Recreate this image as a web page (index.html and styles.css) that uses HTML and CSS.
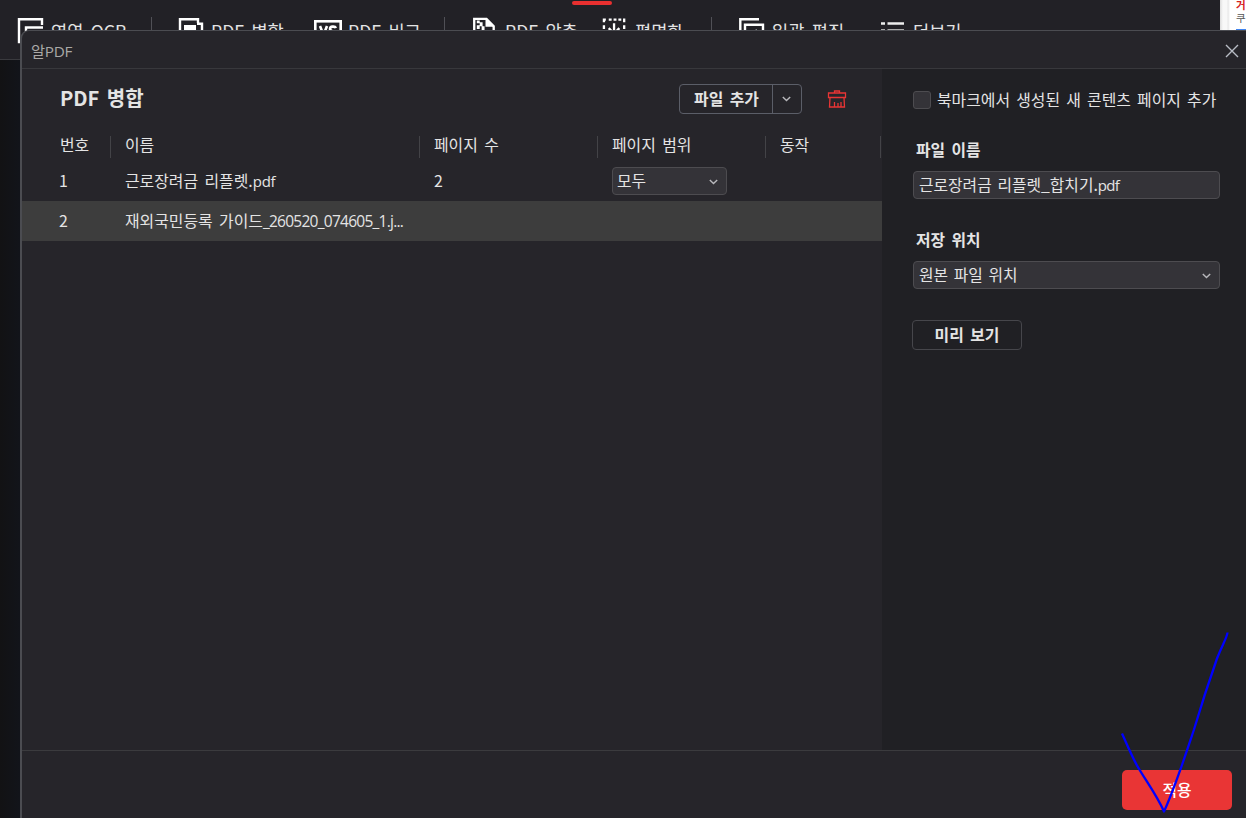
FILE: index.html
```html
<!DOCTYPE html>
<html lang="ko">
<head>
<meta charset="utf-8">
<title>알PDF</title>
<link rel="stylesheet" href="styles.css">
</head>
<body>
<div class="app">
  <header class="toolbar">
    <div class="tab-marker"></div>
    <div class="tool ocr">
      <svg class="tool-icon" width="28" height="28" viewBox="0 0 28 28"><path d="M25 8V2.300H2V25h4" fill="none" stroke="#fff" stroke-width="2.400"/><path d="M9 25V10.500h17" fill="none" stroke="#fff" stroke-width="2.400"/></svg>
      <span>영역 OCR</span>
    </div>
    <i class="tool-sep sep-a"></i>
    <div class="tool merge">
      <svg class="tool-icon" width="28" height="28" viewBox="0 0 28 28"><path d="M21 6V2.300H3v20h4M20 6.800h5v19H9v-4" fill="none" stroke="#fff" stroke-width="2.400"/><path d="M7 8h12v15H7z" fill="#fff"/></svg>
      <span>PDF 병합</span>
    </div>
    <div class="tool compare">
      <svg class="tool-icon" width="28" height="28" viewBox="0 0 28 28"><rect x="1.300" y="4.300" width="25.400" height="20" fill="none" stroke="#fff" stroke-width="2.600"/><path d="M6 9l3.500 9L13 9M22 11c-1-2-6-2-6 1s6 2 6 5-5 3-7 1" fill="none" stroke="#fff" stroke-width="2.600"/></svg>
      <span>PDF 비교</span>
    </div>
    <i class="tool-sep sep-b"></i>
    <div class="tool compress">
      <svg class="tool-icon" width="28" height="28" viewBox="0 0 28 28"><path d="M2.300 27V1.500H15L22.500 9v18" fill="none" stroke="#fff" stroke-width="2.400"/><path d="M14 1l9 8.500h-9zM5 3h3v3H5zM8 5h3v4H8zM5 8h3v4H5zM10 9h3v4h-3z" fill="#fff"/></svg>
      <span>PDF 압축</span>
    </div>
    <div class="tool flatten">
      <svg class="tool-icon" width="28" height="28" viewBox="0 0 28 28"><path d="M1 2.200h3M7 2.200h3M12 2.200h3M17 2.200h3M22 2.200h2M2 1v4M2 8v4M23 1v4M23 8v4" stroke="#fff" stroke-width="2.400"/><path d="M12.500 6v12M7 11l5.500 6 5.500-6" fill="none" stroke="#fff" stroke-width="2.400"/></svg>
      <span>평면화</span>
    </div>
    <i class="tool-sep sep-c"></i>
    <div class="tool batch">
      <svg class="tool-icon" width="28" height="28" viewBox="0 0 28 28"><path d="M21 2.300H2.300v18M7 25V7.800h18V25zM12 20l7-7" fill="none" stroke="#fff" stroke-width="2.400"/></svg>
      <span>일괄 편집</span>
    </div>
    <div class="tool more">
      <svg class="tool-icon" width="28" height="28" viewBox="0 0 28 28"><path d="M1 6.500h4M7.500 6.500H24" stroke="#eee" stroke-width="2.600"/><path d="M1 13h4M7.500 13H24M1 20h4M7.500 20H24" stroke="#aaa" stroke-width="2.200"/></svg>
      <span>더보기</span>
      <svg class="more-caret" width="10" height="6" viewBox="0 0 10 6"><path d="M1 1l4 4 4-4" fill="none" stroke="#777"/></svg>
    </div>
  </header>
  <aside class="side-page"><b>거</b><span>쿠</span><i></i></aside>

  <section class="dialog">
    <div class="titlebar">
      <span class="app-name">알PDF</span>
      <svg width="14" height="14" viewBox="0 0 14 14"><path d="M1 1l12 12M13 1L1 13" stroke="#b9bdc6" stroke-width="1.400"/></svg>
    </div>
    <div class="body">
      <main class="files">
        <div class="head">
          <h1>PDF 병합</h1>
          <div class="split-button">
            <span class="add">파일 추가</span>
            <span class="drop"><svg width="9" height="6" viewBox="0 0 9 6"><path class="caret" d="M.8.900l3.700 3.700L8.200.900"/></svg></span>
          </div>
          <svg class="clear" width="20" height="18" viewBox="0 0 20 18"><path d="M7.500 3V1h5v2M1.500 3h17v4.500h-17zM3 7.500L2.500 17h15L17 7.500M7.500 17v-5M11 17v-4M14 17v-5" fill="none" stroke="#e93535" stroke-width="1.300"/></svg>
        </div>
        <div class="row columns">
          <span>번호</span><span>이름</span><span>페이지 수</span><span>페이지 범위</span><span>동작</span>
        </div>
        <div class="row item">
          <span>1</span><span>근로장려금 리플렛.<span class="latin">pdf</span></span><span>2</span>
          <span><span class="field range">모두<svg width="9" height="6" viewBox="0 0 9 6"><path class="caret" d="M.8.900l3.700 3.700L8.200.900"/></svg></span></span><span></span>
        </div>
        <div class="row item selected">
          <span>2</span><span>재외국민등록 가이드<span class="digits">_260520_074605_1.j...</span></span><span></span><span></span><span></span>
        </div>
      </main>
      <aside class="options">
        <div class="check"><i class="box"></i><span>북마크에서 생성된 새 콘텐츠 페이지 추가</span></div>
        <h2>파일 이름</h2>
        <div class="field">근로장려금 리플렛_합치기.<span class="latin">pdf</span></div>
        <h2 class="second">저장 위치</h2>
        <div class="field">원본 파일 위치<svg width="9" height="6" viewBox="0 0 9 6"><path class="caret" d="M.8.900l3.700 3.700L8.200.900"/></svg></div>
        <div class="preview">미리 보기</div>
      </aside>
    </div>
    <footer class="footer"><div class="apply">적용</div></footer>
  </section>
  <svg class="ink" width="120" height="190" viewBox="0 0 120 190"><path d="M12 103.500c5 11 9 21 15 32 8 14 20 30 27 46 11-24 20-52 30-82 8-27 16-51 23-71 6-15 10-21 10.500-26" fill="none" stroke="#00f" stroke-width="2.300" stroke-linejoin="round"/></svg>
</div>
</body>
</html>
```

FILE: styles.css
```css
* { box-sizing: border-box; }
body { margin: 0; }
.app {
  position: relative;
  width: 1246px;
  height: 818px;
  overflow: hidden;
  background: linear-gradient(90deg, #121214, #12141a 20px);
  color: #e4e4e4;
  font: 15.900px/24px "Noto Sans CJK KR", sans-serif;
  word-spacing: 1.900px;
}
.toolbar {
  display: flex;
  height: 60px;
  padding: 17px 0 0 17px;
  background: #222126;
  border-bottom: 1px solid #3a3a3e;
}
.tab-marker { position: absolute; left: 572px; top: 1px; width: 40px; height: 4px; border-radius: 2px; background: #e93030; }
.tool { display: flex; flex: none; gap: 6px; height: 28px; font-size: 17.600px; line-height: 27px; word-spacing: 2.500px; white-space: nowrap; }
.tool-icon { flex: none; }
.ocr { width: 134px; }
.merge { width: 137px; margin-left: 25px; }
.compare { width: 130px; }
.compress { width: 130px; margin-left: 27px; }
.flatten { width: 109px; }
.flatten .tool-icon { width: 27px; }
.batch { width: 142px; margin-left: 26px; }
.more { gap: 5px; }
.compress .tool-icon { width: 27px; }
.tool-sep { flex: none; width: 1px; height: 28px; background: #505056; }
.more-caret { margin-top: 12px; }
.side-page {
  position: absolute;
  left: 1220px;
  top: 0;
  width: 26px;
  height: 30px;
  padding-left: 16px;
  overflow: hidden;
  background: linear-gradient(90deg, #ddd, #f8f8f8 3px 7px, #e7e7e7 8px, #fff 10px);
  color: #555;
  font-size: 10.500px;
  line-height: 13px;
}
.side-page b, .side-page span, .side-page i { display: block; }
.side-page b { margin-top: -2px; color: #d52121; }
.side-page i { height: 2px; margin-top: 5px; background: #4084ee; }

.dialog {
  position: absolute;
  left: 20px;
  top: 30px;
  display: flex;
  flex-direction: column;
  width: 1240px;
  height: 800px;
  overflow: hidden;
  border: solid #4b4c51;
  border-width: 1px 0 0 2px;
  border-radius: 9px 0 0 0;
  background: #26252a;
}
.titlebar {
  display: flex;
  align-items: center;
  justify-content: space-between;
  height: 38px;
  padding: 2px 21px 0 9px;
  border-bottom: 1px solid #38383c;
  color: #aaa9a7;
}
.app-name { font: 15.300px/20px "Open Sans", "Noto Sans CJK KR", sans-serif; letter-spacing: -.3px; }
.body { display: flex; height: 681px; }
.files { width: 860px; }
.head { display: flex; align-items: center; height: 60px; padding-left: 38px; }
.head h1 { width: 619px; margin: -2px 0 0; font-size: 20px; line-height: 30px; }
.split-button {
  display: flex;
  width: 123px;
  height: 30px;
  border: 1px solid #5b5e68;
  border-radius: 4px;
  font-weight: 700;
}
.add { width: 93px; padding-left: 1px; line-height: 28px; text-align: center; border-right: 1px solid #5b5e68; }
.drop { display: flex; flex: 1; align-items: center; justify-content: center; padding-right: 2px; }
.caret { fill: none; stroke: #b8b8bc; stroke-width: 1.400; }
.clear { margin-left: 25px; }
.row { display: grid; grid-template-columns: 89px 309px 178px 168px 115px; height: 40px; }
.row > span { padding-left: 14px; line-height: 40px; white-space: nowrap; }
.row > span:first-child { padding-left: 37px; }
.columns { height: 32px; }
.columns > span { align-self: center; height: 22px; border-right: 1px solid #434347; line-height: 18px; margin-top: 3px; }
.columns > span:first-child { padding-left: 38px; }
.selected { background: #3d3d3d; }
.latin { font-family: "Open Sans", sans-serif; font-size: 15px; letter-spacing: -.3px; }
.digits { font-family: "Open Sans", sans-serif; font-size: 15.500px; letter-spacing: -.740px; }
.field {
  display: flex;
  align-items: center;
  justify-content: space-between;
  width: 307px;
  height: 28px;
  padding: 0 8px 0 5px;
  border: 1px solid #4d4c50;
  border-radius: 4px;
  background: #343338;
  font-size: 15.800px;
  line-height: 24px;
  word-spacing: 1.300px;
}
.field .latin { margin-right: auto; letter-spacing: -.7px; }
.field svg { margin-top: 2px; }
.range { width: 115px; margin-top: 6px; padding-left: 4px; }
.options { flex: 1; padding: 19px 0 0 30px; background: #202024; }
.check { display: flex; align-items: center; gap: 6px; height: 24px; }
.check span { line-height: 22px; word-spacing: 1.700px; }
.box { width: 18px; height: 18px; margin-left: 1px; border: 1px solid #4d4c50; border-radius: 3px; background: #343338; }
.options h2 { margin: 25px 0 9px 4px; font-size: 15.800px; line-height: 25px; }
.options .field { margin-left: 1px; }
.options h2.second { margin-top: 28px; }
.preview { width: 110px; height: 30px; margin-top: 31px; border: 1px solid #46464b; border-radius: 4px; text-align: center; font-weight: 700; line-height: 28px; }
.footer { height: 80px; padding: 19px 0 0 1100px; border-top: 1px solid #3b3b3e; }
.apply { width: 110px; height: 40px; border-radius: 5px; background: #e93535; color: #fff; text-align: center; font-weight: 500; line-height: 40px; }
.ink { position: absolute; left: 1110px; top: 630px; }
```
